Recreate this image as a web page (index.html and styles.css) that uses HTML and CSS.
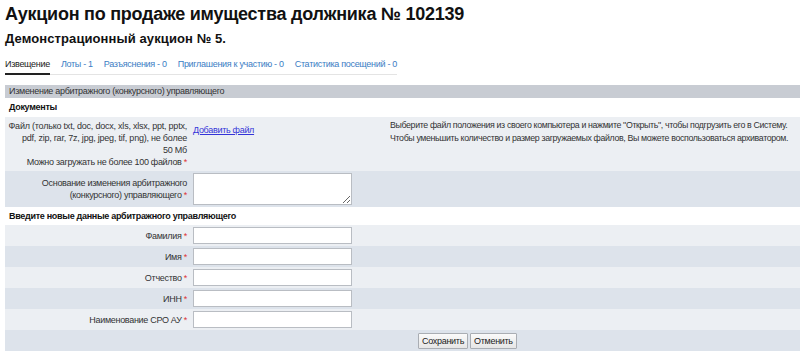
FILE: index.html
```html
<!DOCTYPE html>
<html lang="ru">
<head>
<meta charset="utf-8">
<title>Аукцион № 102139</title>
<link rel="stylesheet" href="styles.css">
</head>
<body>
<div class="page">
  <h1 class="title">Аукцион по продаже имущества должника № 102139</h1>
  <h2 class="subtitle">Демонстрационный аукцион № 5.</h2>
  <ul class="tabs">
    <li class="tab active">Извещение</li>
    <li class="tab"><a href="#">Лоты - 1</a></li>
    <li class="tab"><a href="#">Разъяснения - 0</a></li>
    <li class="tab"><a href="#">Приглашения к участию - 0</a></li>
    <li class="tab"><a href="#">Статистика посещений - 0</a></li>
  </ul>
  <div class="panel">
    <div class="panel-head">Изменение арбитражного (конкурсного) управляющего</div>
    <table class="form">
      <colgroup><col class="c-label"><col class="c-field"><col class="c-hint"></colgroup>
      <tr class="group first"><td colspan="3">Документы</td></tr>
      <tr class="light">
        <td class="label file"><span class="latin">Файл (только txt, doc, docx, xls, xlsx, ppt, pptx,<br>pdf, zip, rar, 7z, jpg, jpeg, tif, png), не более<br>50 Мб</span><br>Можно загружать не более 100 файлов <span class="req">*</span></td>
        <td class="field top"><a class="add" href="#">Добавить файл</a></td>
        <td class="hint">Выберите файл положения из своего компьютера и нажмите "Открыть", чтобы подгрузить его в Систему.<br>Чтобы уменьшить количество и размер загружаемых файлов, Вы можете воспользоваться архиватором.</td>
      </tr>
      <tr class="dark">
        <td class="label">Основание изменения арбитражного<br>(конкурсного) управляющего <span class="req">*</span></td>
        <td class="field"><textarea class="area"></textarea></td>
        <td></td>
      </tr>
      <tr class="group"><td colspan="3">Введите новые данные арбитражного управляющего</td></tr>
      <tr class="light"><td class="label">Фамилия <span class="req">*</span></td><td class="field"><input class="inp" type="text"></td><td></td></tr>
      <tr class="dark"><td class="label">Имя <span class="req">*</span></td><td class="field"><input class="inp" type="text"></td><td></td></tr>
      <tr class="light"><td class="label">Отчество <span class="req">*</span></td><td class="field"><input class="inp" type="text"></td><td></td></tr>
      <tr class="dark"><td class="label">ИНН <span class="req">*</span></td><td class="field"><input class="inp" type="text"></td><td></td></tr>
      <tr class="light"><td class="label">Наименование СРО АУ <span class="req">*</span></td><td class="field"><input class="inp" type="text"></td><td></td></tr>
      <tr class="dark"><td colspan="3" class="actions"><button class="btn" type="button">Сохранить</button><button class="btn" type="button">Отменить</button></td></tr>
    </table>
  </div>
</div>
</body>
</html>
```
FILE: styles.css
```css
html, body {
  margin: 0;
  padding: 0;
  background: #fff;
}
body {
  font-family: "Liberation Sans", Arial, sans-serif;
  font-size: 9px;
  letter-spacing: -0.3px;
  color: #333;
}
.page {
  padding-left: 5px;
}
.title {
  margin: 0;
  padding-top: 2px;
  font-size: 18px;
  letter-spacing: -0.25px;
  line-height: 24px;
  font-weight: bold;
  color: #111;
}
.subtitle {
  margin: 4px 0 0;
  font-size: 13px;
  letter-spacing: 0.1px;
  line-height: 18px;
  font-weight: bold;
  color: #111;
}
.tabs {
  display: inline-flex;
  list-style: none;
  margin: 8px 0 0;
  padding: 0;
  gap: 11px;
  border-bottom: 1px solid #e4e4e4;
}
.tab {
  line-height: 13px;
  padding: 2px 0 2px;
  border-bottom: 2px solid transparent;
  margin-bottom: -1px;
}
.tab a {
  color: #3b7dc4;
  text-decoration: none;
}
.tab.active {
  color: #222;
  border-bottom-color: #222;
}
.panel {
  margin-top: 10px;
}
.panel-head {
  background: #c8ccd3;
  color: #333;
  line-height: 13px;
  height: 13px;
  padding: 0 4px;
}
.form {
  width: 100%;
  table-layout: fixed;
  border-collapse: collapse;
  border-spacing: 0;
}
.c-label { width: 185px; }
.c-field { width: 197px; }
.form td {
  padding: 2px 3px;
  line-height: 12px;
  vertical-align: middle;
}
.group td {
  font-weight: bold;
  color: #111;
  padding: 3px 4px;
  background: #fff;
}
.group.first td {
  padding-bottom: 4px;
}
.light { background: #eceff3; }
.dark { background: #dde3eb; }
.form td.label {
  text-align: right;
  white-space: nowrap;
  padding-right: 3px;
}
.form td.file {
  padding-top: 3px;
  padding-bottom: 3px;
}
.latin {
  letter-spacing: -0.22px;
}
.req {
  color: #d33;
}
.form td.top {
  vertical-align: top;
  padding-top: 7px;
}
.form td.hint {
  vertical-align: top;
  white-space: nowrap;
  padding: 2px 0 2px 3px;
  line-height: 13px;
  font-size: 8.8px;
  letter-spacing: -0.35px;
  color: #333;
}
.add {
  color: #3434d8;
  text-decoration: underline;
}
.area {
  display: block;
  box-sizing: border-box;
  width: 159px;
  height: 32px;
  margin: 0;
  border: 1px solid #b9bdc3;
  background: #fff;
  resize: vertical;
}
.inp {
  display: block;
  box-sizing: border-box;
  width: 159px;
  height: 17px;
  margin: 0;
  padding: 0 2px;
  border: 1px solid #b9bdc3;
  border-radius: 0;
  background: #fff;
  font: 9px "Liberation Sans", Arial, sans-serif;
}
.form td.actions {
  padding: 2px 0 2px 413px;
  height: 17px;
}
.btn {
  font: 9px "Liberation Sans", Arial, sans-serif;
  letter-spacing: -0.3px;
  color: #222;
  height: 16px;
  line-height: 12px;
  padding: 0 3px;
  margin: 0 2px 0 0;
  border: 1px solid #a9adb3;
  border-radius: 1px;
  background: linear-gradient(#fafafa, #e6e6e6);
  vertical-align: middle;
}
```
